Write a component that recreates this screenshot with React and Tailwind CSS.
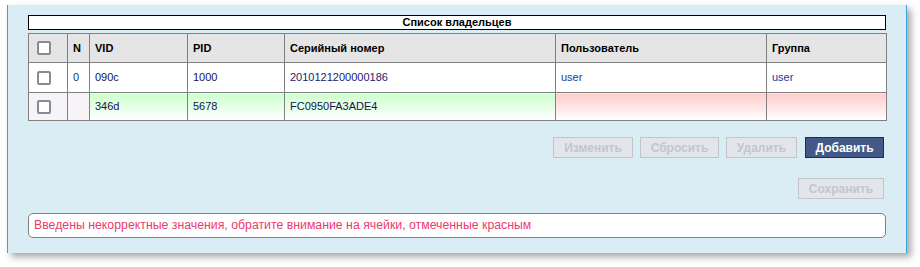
import React from 'react';

const cols = ['w-[39px]', 'w-[22px]', 'w-[98px]', 'w-[97px]', 'w-[271px]', 'w-[211px]', 'w-[120px]'];

const Checkbox = () => (
  <span className="block w-[14px] h-[14px] rounded-[2px] border-2 border-[#8a8a92] bg-white" />
);

const cell = 'border border-[#808080] px-[5px] align-middle';

const App = () => {
  return (
    <div className="w-[920px] h-[267px] bg-white pt-[5px] pl-[7px] font-['Liberation_Sans',Arial,sans-serif]">
      {/* Panel */}
      <div className="w-[900px] h-[248px] bg-[#daedf5] border-x border-[#3aa3dc] shadow-[4px_4px_7px_rgba(0,0,0,0.35)] px-[20px] pt-[10px] flex flex-col">
        <div className="h-[15px] border border-black bg-white flex items-center justify-center text-[11px] font-bold text-black leading-none">
          Список владельцев
        </div>

        <table className="mt-[3px] w-[858px] border-collapse table-fixed text-[11px] leading-none">
          <colgroup>
            {cols.map((c, i) => <col key={i} className={c} />)}
          </colgroup>
          <thead>
            <tr className="h-[29px] bg-[#e5e5e5] text-black font-bold text-left">
              <th className={cell + ' pl-[8px]'}><Checkbox /></th>
              <th className={cell}>N</th>
              <th className={cell}>VID</th>
              <th className={cell}>PID</th>
              <th className={cell}>Серийный номер</th>
              <th className={cell}>Пользователь</th>
              <th className={cell}>Группа</th>
            </tr>
          </thead>
          <tbody>
            <tr className="h-[30px] bg-white text-[#14144e]">
              <td className={cell + ' pl-[8px]'}><Checkbox /></td>
              <td className={cell + ' text-[#14307e]'}>0</td>
              <td className={cell}>090c</td>
              <td className={cell}>1000</td>
              <td className={cell + ' text-[#1c206e]'}>2010121200000186</td>
              <td className={cell + ' text-[#1a3a9c]'}>user</td>
              <td className={cell + ' text-[#1a3a9c]'}>user</td>
            </tr>
            <tr className="h-[28px] text-[#14144e]">
              <td className={cell + ' pl-[8px] bg-[#f6f4f6]'}><Checkbox /></td>
              <td className={cell + ' bg-[#f6f4f6]'}></td>
              <td className={cell + ' bg-linear-to-b from-[#ccffcc] to-white'}>346d</td>
              <td className={cell + ' bg-linear-to-b from-[#ccffcc] to-white'}>5678</td>
              <td className={cell + ' bg-linear-to-b from-[#ccffcc] to-white'}>FC0950FA3ADE4</td>
              <td className={cell + ' bg-linear-to-b from-[#ffcccc] to-white'}></td>
              <td className={cell + ' bg-linear-to-b from-[#ffcccc] to-white'}></td>
            </tr>
          </tbody>
        </table>

        {/* Action buttons */}
        <div className="mt-[16px] pr-[2px] flex justify-end gap-[7px] text-[12px] font-bold leading-none">
          <button className="w-[80px] h-[21px] bg-[#e2e6eb] border border-[#c2c4c6] text-[#c2c6ca]">Изменить</button>
          <button className="w-[79px] h-[21px] bg-[#e2e6eb] border border-[#c2c4c6] text-[#c2c6ca]">Сбросить</button>
          <button className="w-[71px] h-[21px] bg-[#e2e6eb] border border-[#c2c4c6] text-[#c2c6ca]">Удалить</button>
          <button className="ml-[1px] w-[79px] h-[21px] bg-[#435a88] border border-[#1a2a6e] text-white">Добавить</button>
        </div>

        <div className="mt-[20px] pr-[2px] flex justify-end text-[12px] font-bold leading-none">
          <button className="w-[86px] h-[21px] bg-[#e2e6eb] border border-[#c2c4c6] text-[#c2c6ca]">Сохранить</button>
        </div>

        {/* Message */}
        <div className="mt-[14px] h-[25px] rounded-[5px] border border-[#808080] bg-white flex items-center px-[5px] text-[12.3px] text-[#ec3a70]">
          Введены некорректные значения, обратите внимание на ячейки, отмеченные красным
        </div>
      </div>
    </div>
  );
};

export default App;
